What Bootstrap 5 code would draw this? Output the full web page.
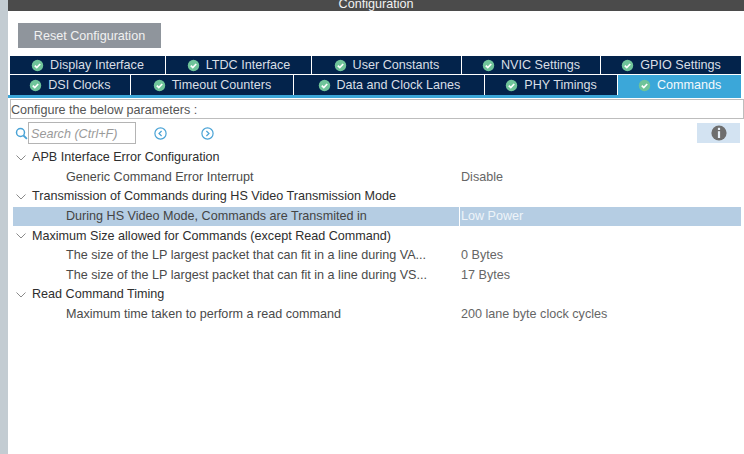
<!DOCTYPE html>
<html lang="en">
<head>
  <meta charset="UTF-8" />
  <meta name="viewport" content="width=device-width, initial-scale=1" />
  <title>Configuration</title>
  <link href="https://cdn.jsdelivr.net/npm/bootstrap@5.3.1/dist/css/bootstrap.min.css" rel="stylesheet" />
  <style>
    html, body { height: 100%; overflow: hidden; }
    body {
      font-family: "Liberation Sans", Arial, sans-serif;
      font-size: 12.6px;
      color: #555;
      background: #fff;
    }
    .page-wrap { height: 454px; }
    .side-strip { width: 8px; background: #c3ccd2; flex: none; }
    .main-area { flex: 1; min-width: 0; }
    .title-bar {
      height: 11px;
      background: #4b4b4b;
      color: #f2f2f2;
      line-height: 9px;
      overflow: hidden;
      text-align: center;
    }
    .reset-btn {
      margin: 12px 0 0 10px;
      width: 143px;
      height: 25px;
      padding: 1px 0 0;
      border: 0;
      border-radius: 0;
      background: #8f959c;
      color: #f1f1f1;
      font-size: 12.6px;
      line-height: 24px;
    }
    .reset-btn:hover { background: #8f959c; color: #f1f1f1; }
    .tab-block { margin: 8px 3px 0 2px; }
    .tab-row { flex-wrap: nowrap; gap: 1px; }
    .tab-row + .tab-row { margin-top: 1px; }
    .tab-row .nav-link {
      display: flex;
      align-items: center;
      justify-content: center;
      gap: 6px;
      padding: 1px 0 0;
      height: 18px;
      background: #03234b;
      color: #d9dfe6;
      font-size: 12.6px;
      border-radius: 0;
    }
    .tab-second .nav-link { height: 20px; padding: 0; }
    .tab-row .nav-link.active { background: #3ba7d9; color: #f4f9fc; }
    .tab-first .nav-item:nth-child(1) { width: 155px; }
    .tab-first .nav-item:nth-child(2) { width: 145px; }
    .tab-first .nav-item:nth-child(3) { width: 149px; }
    .tab-first .nav-item:nth-child(4) { width: 138px; }
    .tab-first .nav-item:nth-child(5) { width: 140px; }
    .tab-second .nav-item:nth-child(1) { width: 120px; }
    .tab-second .nav-item:nth-child(2) { width: 163px; }
    .tab-second .nav-item:nth-child(3) { width: 190px; }
    .tab-second .nav-item:nth-child(4) { width: 133px; }
    .tab-second .nav-item:nth-child(5) { width: 123px; }
    .tab-rule { height: 3px; background: #3ba7d9; margin: 0 3px 0 0; }
    .params-box {
      margin: 1px 0 0 2px;
      height: 20px;
      border: 1px solid #bdbdbd;
      line-height: 20px;
      color: #555;
    }
    .tool-row { margin: 2px 4px 0 7px; height: 24px; }
    .search-field {
      width: 108px;
      height: 22px;
      padding: 2px 2px 0;
      border: 1px solid #b4b4b4;
      border-radius: 0;
      font-size: 12.6px;
      font-style: italic;
      font-family: inherit;
      color: #888;
    }
    .search-field::placeholder { color: #9a9a9a; opacity: 1; }
    .nav-arrow { display: block; flex: none; }
    .arrow-prev { margin-left: 18px; }
    .arrow-next { margin-left: 34px; }
    .info-tile {
      width: 43px;
      height: 20px;
      background: #d3e3f2;
    }
    .tree-list { margin: 3px 3px 0 5px; }
    .tree-row { height: 19.6px; line-height: 19px; }
    .tree-group { color: #2e2e2e; }
    .tree-chevron { width: 13px; flex: none; display: flex; justify-content: flex-end; }
    .tree-group .tree-label { padding-left: 6px; }
    .tree-child .tree-label { padding-left: 53px; width: 446px; flex: none; color: #4a4a4a; }
    .tree-child .tree-value { padding-left: 2px; color: #666; }
    .tree-child.row-picked { background: #b5cde3; }
    .row-picked .tree-label { border-right: 1px solid #fff; width: 447px; color: #444; }
    .tree-child.row-picked .tree-value { color: #eef4f9; padding-left: 1px; }
  </style>
</head>
<body>
  <div class="page-wrap d-flex">
    <div class="side-strip"></div>
    <div class="main-area d-flex flex-column">
      <div class="title-bar">Configuration</div>
      <div><button class="btn reset-btn" type="button">Reset Configuration</button></div>

      <div class="tab-block">
        <ul class="nav tab-row tab-first">
          <li class="nav-item"><a class="nav-link" href="#"><svg width="13" height="13" viewBox="0 0 13 13"><circle cx="6.5" cy="6.5" r="5.7" fill="#6fc49a"/><path d="M3.8 6.6l2 2 3.4-3.6" fill="none" stroke="#fff" stroke-width="1.7"/></svg>Display Interface</a></li>
          <li class="nav-item"><a class="nav-link" href="#"><svg width="13" height="13" viewBox="0 0 13 13"><circle cx="6.5" cy="6.5" r="5.7" fill="#6fc49a"/><path d="M3.8 6.6l2 2 3.4-3.6" fill="none" stroke="#fff" stroke-width="1.7"/></svg>LTDC Interface</a></li>
          <li class="nav-item"><a class="nav-link" href="#"><svg width="13" height="13" viewBox="0 0 13 13"><circle cx="6.5" cy="6.5" r="5.7" fill="#6fc49a"/><path d="M3.8 6.6l2 2 3.4-3.6" fill="none" stroke="#fff" stroke-width="1.7"/></svg>User Constants</a></li>
          <li class="nav-item"><a class="nav-link" href="#"><svg width="13" height="13" viewBox="0 0 13 13"><circle cx="6.5" cy="6.5" r="5.7" fill="#6fc49a"/><path d="M3.8 6.6l2 2 3.4-3.6" fill="none" stroke="#fff" stroke-width="1.7"/></svg>NVIC Settings</a></li>
          <li class="nav-item"><a class="nav-link" href="#"><svg width="13" height="13" viewBox="0 0 13 13"><circle cx="6.5" cy="6.5" r="5.7" fill="#6fc49a"/><path d="M3.8 6.6l2 2 3.4-3.6" fill="none" stroke="#fff" stroke-width="1.7"/></svg>GPIO Settings</a></li>
        </ul>
        <ul class="nav tab-row tab-second">
          <li class="nav-item"><a class="nav-link" href="#"><svg width="13" height="13" viewBox="0 0 13 13"><circle cx="6.5" cy="6.5" r="5.7" fill="#6fc49a"/><path d="M3.8 6.6l2 2 3.4-3.6" fill="none" stroke="#fff" stroke-width="1.7"/></svg>DSI Clocks</a></li>
          <li class="nav-item"><a class="nav-link" href="#"><svg width="13" height="13" viewBox="0 0 13 13"><circle cx="6.5" cy="6.5" r="5.7" fill="#6fc49a"/><path d="M3.8 6.6l2 2 3.4-3.6" fill="none" stroke="#fff" stroke-width="1.7"/></svg>Timeout Counters</a></li>
          <li class="nav-item"><a class="nav-link" href="#"><svg width="13" height="13" viewBox="0 0 13 13"><circle cx="6.5" cy="6.5" r="5.7" fill="#6fc49a"/><path d="M3.8 6.6l2 2 3.4-3.6" fill="none" stroke="#fff" stroke-width="1.7"/></svg>Data and Clock Lanes</a></li>
          <li class="nav-item"><a class="nav-link" href="#"><svg width="13" height="13" viewBox="0 0 13 13"><circle cx="6.5" cy="6.5" r="5.7" fill="#6fc49a"/><path d="M3.8 6.6l2 2 3.4-3.6" fill="none" stroke="#fff" stroke-width="1.7"/></svg>PHY Timings</a></li>
          <li class="nav-item"><a class="nav-link active" href="#"><svg width="13" height="13" viewBox="0 0 13 13"><circle cx="6.5" cy="6.5" r="5.7" fill="#6fc49a"/><path d="M3.8 6.6l2 2 3.4-3.6" fill="none" stroke="#fff" stroke-width="1.7"/></svg>Commands</a></li>
        </ul>
      </div>
      <div class="tab-rule"></div>

      <div class="params-box">Configure the below parameters :</div>

      <div class="tool-row d-flex align-items-center">
        <svg width="13" height="13" viewBox="0 0 13 13"><circle cx="5.5" cy="5.5" r="4" fill="none" stroke="#4aa3d6" stroke-width="1.5"/><path d="M8.5 8.5l3.4 3.4" stroke="#4aa3d6" stroke-width="1.8"/></svg>
        <input class="search-field" type="text" placeholder="Search (Ctrl+F)" />
        <svg class="nav-arrow arrow-prev" width="13" height="13" viewBox="0 0 13 13"><circle cx="6.5" cy="6.5" r="5.6" fill="none" stroke="#4aa3d6" stroke-width="1.2"/><path d="M7.6 4L5 6.5 7.6 9" fill="none" stroke="#4aa3d6" stroke-width="1.2"/></svg>
        <svg class="nav-arrow arrow-next" width="13" height="13" viewBox="0 0 13 13"><circle cx="6.5" cy="6.5" r="5.6" fill="none" stroke="#4aa3d6" stroke-width="1.2"/><path d="M5.4 4L8 6.5 5.4 9" fill="none" stroke="#4aa3d6" stroke-width="1.2"/></svg>
        <div class="info-tile ms-auto d-flex align-items-center justify-content-center">
          <svg width="16" height="16" viewBox="0 0 16 16"><circle cx="8" cy="8" r="7.6" fill="#6e6e6e"/><rect x="6.9" y="2.8" width="2.2" height="2.2" fill="#e6eef6"/><rect x="6.9" y="6.2" width="2.2" height="6.8" fill="#e6eef6"/></svg>
        </div>
      </div>

      <div class="tree-list">
        <div class="tree-row tree-group d-flex align-items-center"><span class="tree-chevron"><svg width="10" height="6" viewBox="0 0 10 6"><path d="M.5.5L5 5 9.5.5" fill="none" stroke="#8a8a8a"/></svg></span><span class="tree-label">APB Interface Error Configuration</span></div>
        <div class="tree-row tree-child d-flex"><span class="tree-label">Generic Command Error Interrupt</span><span class="tree-value">Disable</span></div>
        <div class="tree-row tree-group d-flex align-items-center"><span class="tree-chevron"><svg width="10" height="6" viewBox="0 0 10 6"><path d="M.5.5L5 5 9.5.5" fill="none" stroke="#8a8a8a"/></svg></span><span class="tree-label">Transmission of Commands during HS Video Transmission Mode</span></div>
        <div class="tree-row tree-child row-picked d-flex"><span class="tree-label">During HS Video Mode, Commands are Transmited in</span><span class="tree-value">Low Power</span></div>
        <div class="tree-row tree-group d-flex align-items-center"><span class="tree-chevron"><svg width="10" height="6" viewBox="0 0 10 6"><path d="M.5.5L5 5 9.5.5" fill="none" stroke="#8a8a8a"/></svg></span><span class="tree-label">Maximum Size allowed for Commands (except Read Command)</span></div>
        <div class="tree-row tree-child d-flex"><span class="tree-label">The size of the LP largest packet that can fit in a line during VA...</span><span class="tree-value">0 Bytes</span></div>
        <div class="tree-row tree-child d-flex"><span class="tree-label">The size of the LP largest packet that can fit in a line during VS...</span><span class="tree-value">17 Bytes</span></div>
        <div class="tree-row tree-group d-flex align-items-center"><span class="tree-chevron"><svg width="10" height="6" viewBox="0 0 10 6"><path d="M.5.5L5 5 9.5.5" fill="none" stroke="#8a8a8a"/></svg></span><span class="tree-label">Read Command Timing</span></div>
        <div class="tree-row tree-child d-flex"><span class="tree-label">Maximum time taken to perform a read command</span><span class="tree-value">200 lane byte clock cycles</span></div>
      </div>
    </div>
  </div>
  <script src="https://cdn.jsdelivr.net/npm/bootstrap@5.3.1/dist/js/bootstrap.bundle.min.js"></script>
</body>
</html>
